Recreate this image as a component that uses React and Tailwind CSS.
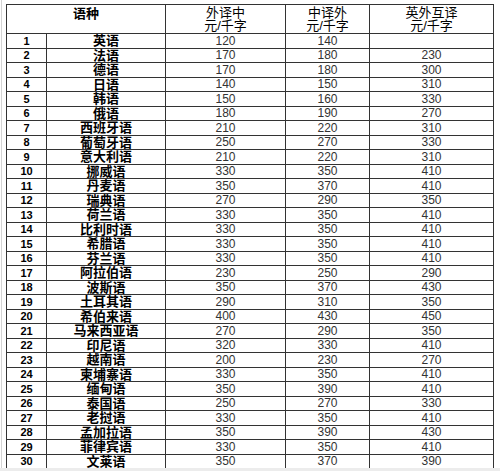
import React from "react";

const rows = [
  [1, "英语", "120", "140", ""],
  [2, "法语", "170", "180", "230"],
  [3, "德语", "170", "180", "300"],
  [4, "日语", "140", "150", "310"],
  [5, "韩语", "150", "160", "330"],
  [6, "俄语", "180", "190", "270"],
  [7, "西班牙语", "210", "220", "310"],
  [8, "葡萄牙语", "250", "270", "330"],
  [9, "意大利语", "210", "220", "310"],
  [10, "挪威语", "330", "350", "410"],
  [11, "丹麦语", "350", "370", "410"],
  [12, "瑞典语", "270", "290", "350"],
  [13, "荷兰语", "330", "350", "410"],
  [14, "比利时语", "330", "350", "410"],
  [15, "希腊语", "330", "350", "410"],
  [16, "芬兰语", "330", "350", "410"],
  [17, "阿拉伯语", "230", "250", "290"],
  [18, "波斯语", "350", "370", "430"],
  [19, "土耳其语", "290", "310", "350"],
  [20, "希伯来语", "400", "430", "450"],
  [21, "马来西亚语", "270", "290", "350"],
  [22, "印尼语", "320", "330", "410"],
  [23, "越南语", "200", "230", "270"],
  [24, "柬埔寨语", "330", "350", "410"],
  [25, "缅甸语", "350", "390", "410"],
  [26, "泰国语", "250", "270", "330"],
  [27, "老挝语", "330", "350", "410"],
  [28, "孟加拉语", "350", "390", "430"],
  [29, "菲律宾语", "330", "350", "410"],
  [30, "文莱语", "350", "370", "390"],
];

const cell = "border border-[#333] p-0 text-center";

function HeadCell({ top, bottom }) {
  return (
    <th className={`${cell} align-top pt-[1px] text-[13px] font-normal text-black`}>
      <div className="leading-[13px]">{top}</div>
      <div className="leading-[13px]">{bottom}</div>
    </th>
  );
}

export default function App() {
  return (
    <div className="w-[500px] h-[471px] overflow-hidden bg-white flex flex-col font-['Liberation_Sans','Noto_Sans_CJK_SC',sans-serif]">
      <div className="flex-1 min-h-0 overflow-hidden pl-px">
        <div className="h-full border-l border-[#d4d4d4] pl-[4px] pt-[4px]">
          <table className="table-fixed border-collapse w-[487px]">
            <colgroup>
              <col className="w-[40px]" />
              <col className="w-[119px]" />
              <col className="w-[120px]" />
              <col className="w-[84px]" />
              <col className="w-[124px]" />
            </colgroup>
            <thead>
              <tr className="h-[29px]">
                <th colSpan={2} className={`${cell} align-top pt-[2px] text-[13px] leading-[13px] font-bold text-black`}>
                  语种
                </th>
                <HeadCell top="外译中" bottom="元/千字" />
                <HeadCell top="中译外" bottom="元/千字" />
                <HeadCell top="英外互译" bottom="元/千字" />
              </tr>
            </thead>
            <tbody>
              {rows.map(([n, lang, a, b, c]) => (
                <tr key={n} className="h-[14.5px]">
                  <td className={`${cell} text-[11px] leading-[12px] font-bold text-black`}>{n}</td>
                  <td className={`${cell} text-[13px] leading-[13px] font-bold text-black`}>{lang}</td>
                  <td className={`${cell} text-[12px] leading-[12px] text-[#333]`}>{a}</td>
                  <td className={`${cell} text-[12px] leading-[12px] text-[#333]`}>{b}</td>
                  <td className={`${cell} text-[12px] leading-[12px] text-[#333]`}>{c}</td>
                </tr>
              ))}
            </tbody>
          </table>
        </div>
      </div>
      <div className="h-[3px] bg-[#ececec]" />
    </div>
  );
}
